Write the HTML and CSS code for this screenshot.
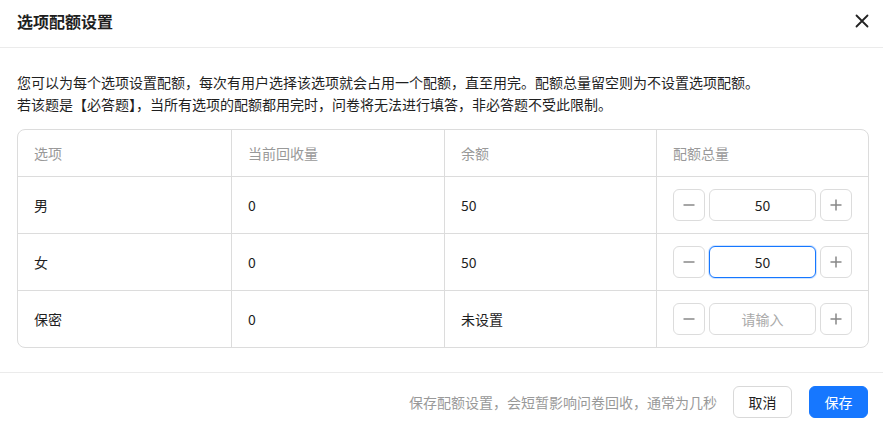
FILE: index.html
```html
<!DOCTYPE html>
<html>

<head>
    <meta charset="utf-8">
    <title>选项配额设置</title>
    <link rel="stylesheet" href="styles.css">
</head>

<body>
    <div class="dialog">
        <header class="dlg-head">
            <span class="dlg-title">选项配额设置</span>
            <span class="dlg-close">
                <svg width="14" height="14" viewBox="0 0 14 14">
                    <path d="M1.5 1.5L12.5 12.5M12.5 1.5L1.5 12.5" stroke="#222" stroke-width="1.8" stroke-linecap="round" />
                </svg>
            </span>
        </header>

        <section class="dlg-body">
            <p class="tip">
                您可以为每个选项设置配额，每次有用户选择该选项就会占用一个配额，直至用完。配额总量留空则为不设置选项配额。<br>
                若该题是【必答题】，当所有选项的配额都用完时，问卷将无法进行填答，非必答题不受此限制。
            </p>

            <table class="quota">
                <colgroup>
                    <col class="c1">
                    <col class="c2">
                    <col class="c3">
                    <col>
                </colgroup>
                <thead>
                    <tr>
                        <th>选项</th>
                        <th>当前回收量</th>
                        <th>余额</th>
                        <th>配额总量</th>
                    </tr>
                </thead>
                <tbody>
                    <tr>
                        <td>男</td>
                        <td>0</td>
                        <td>50</td>
                        <td>
                            <div class="stepper">
                                <button class="step"><svg width="12" height="12" viewBox="0 0 12 12"><path d="M0.5 6H11.5" stroke="#888" stroke-width="1.5" /></svg></button>
                                <input class="num" value="50">
                                <button class="step"><svg width="12" height="12" viewBox="0 0 12 12"><path d="M0.5 6H11.5M6 0.5V11.5" stroke="#888" stroke-width="1.5" /></svg></button>
                            </div>
                        </td>
                    </tr>
                    <tr>
                        <td>女</td>
                        <td>0</td>
                        <td>50</td>
                        <td>
                            <div class="stepper">
                                <button class="step"><svg width="12" height="12" viewBox="0 0 12 12"><path d="M0.5 6H11.5" stroke="#888" stroke-width="1.5" /></svg></button>
                                <input class="num focus" value="50">
                                <button class="step"><svg width="12" height="12" viewBox="0 0 12 12"><path d="M0.5 6H11.5M6 0.5V11.5" stroke="#888" stroke-width="1.5" /></svg></button>
                            </div>
                        </td>
                    </tr>
                    <tr>
                        <td>保密</td>
                        <td>0</td>
                        <td>未设置</td>
                        <td>
                            <div class="stepper">
                                <button class="step"><svg width="12" height="12" viewBox="0 0 12 12"><path d="M0.5 6H11.5" stroke="#888" stroke-width="1.5" /></svg></button>
                                <input class="num" placeholder="请输入">
                                <button class="step"><svg width="12" height="12" viewBox="0 0 12 12"><path d="M0.5 6H11.5M6 0.5V11.5" stroke="#888" stroke-width="1.5" /></svg></button>
                            </div>
                        </td>
                    </tr>
                </tbody>
            </table>
        </section>

        <footer class="dlg-foot">
            <span class="foot-tip">保存配额设置，会短暂影响问卷回收，通常为几秒</span>
            <button class="btn">取消</button>
            <button class="btn primary">保存</button>
        </footer>
    </div>
</body>

</html>
```

FILE: styles.css
```css
html,
body {
    margin: 0;
    padding: 0;
    width: 100%;
    height: 100%;
}

body {
    background-color: #fff;
    color: #1f1f1f;
    font-family: "Noto Sans CJK SC", "Noto Sans", sans-serif;
    font-size: 14px;
}

.dlg-head {
    display: flex;
    align-items: center;
    justify-content: space-between;
    height: 47px;
    padding: 0 14px 0 17px;
    border-bottom: 1px solid #ebebeb;
}

.dlg-title {
    font-size: 16px;
    font-weight: bold;
    color: #1f1f1f;
    margin-top: -5px;
}

.dlg-close {
    display: flex;
    margin-top: -5px;
}

.dlg-body {
    padding: 23px 14px 24px 17px;
    border-bottom: 1px solid #ebebeb;
}

.tip {
    margin: 0 0 14px;
    line-height: 22px;
    color: #1f1f1f;
}

table.quota {
    width: 100%;
    table-layout: fixed;
    border-collapse: separate;
    border-spacing: 0;
    border: 1px solid #dcdcdc;
    border-radius: 8px;
}

.quota col.c1 {
    width: 214px;
}

.quota col.c2 {
    width: 213px;
}

.quota col.c3 {
    width: 212px;
}

.quota th,
.quota td {
    text-align: left;
    padding: 0 16px;
    border-right: 1px solid #dcdcdc;
    border-bottom: 1px solid #dcdcdc;
}

.quota th:last-child,
.quota td:last-child {
    border-right: none;
}

.quota tr:last-child td {
    border-bottom: none;
}

.quota th {
    height: 46px;
    font-weight: normal;
    color: #999;
}

.quota td {
    height: 56px;
    color: #1f1f1f;
}

.stepper {
    display: flex;
    gap: 4px;
}

.step {
    width: 32px;
    height: 32px;
    flex: none;
    display: flex;
    align-items: center;
    justify-content: center;
    padding: 0;
    background: #fff;
    border: 1px solid #dcdcdc;
    border-radius: 6px;
}

.num {
    flex: 1;
    min-width: 0;
    height: 32px;
    box-sizing: border-box;
    border: 1px solid #dcdcdc;
    border-radius: 6px;
    text-align: center;
    font-family: inherit;
    font-size: 14px;
    color: #1f1f1f;
    outline: none;
}

.num::placeholder {
    color: #aaa;
}

.num.focus {
    border-color: #1677ff;
    box-shadow: 0 0 0 1px rgba(22, 119, 255, 0.2);
}

.dlg-foot {
    display: flex;
    align-items: center;
    justify-content: flex-end;
    gap: 16px;
    padding: 13px 15px 0 0;
}

.foot-tip {
    color: #999;
}

.btn {
    width: 59px;
    height: 32px;
    padding: 0;
    font-family: inherit;
    font-size: 14px;
    color: #1f1f1f;
    background: #fff;
    border: 1px solid #d9d9d9;
    border-radius: 6px;
}

.btn.primary {
    margin-left: 1px;
    color: #fff;
    background: #1677ff;
    border-color: #1677ff;
}
```
